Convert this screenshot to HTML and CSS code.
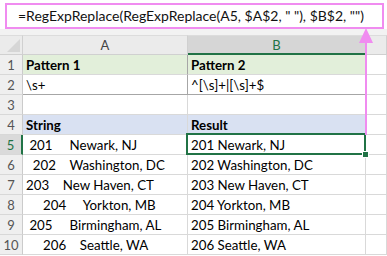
FILE: index.html
```html
<!DOCTYPE html>
<html lang="en">
<head>
    <meta charset="UTF-8">
    <title>RegExpReplace</title>
    <link rel="stylesheet" href="styles.css">
</head>
<body>

    <!-- Formula bar -->
    <div class="formula-bar">=RegExpReplace(RegExpReplace(A5, $A$2, " "), $B$2, "")</div>
    <div class="band"></div>

    <!-- Sheet -->
    <div class="sheet">
        <div class="corner"></div>
        <div class="col-head">A</div>
        <div class="col-head selected">B</div>
        <div class="col-head"></div>

        <div class="row-head">1</div>
        <div class="cell green bold boxed">Pattern 1</div>
        <div class="cell green bold">Pattern 2</div>
        <div class="cell"></div>

        <div class="row-head">2</div>
        <div class="cell boxed bottom-dark">\s+</div>
        <div class="cell bottom-dark">^[\s]+|[\s]+$</div>
        <div class="cell"></div>

        <div class="row-head">3</div>
        <div class="cell"></div>
        <div class="cell"></div>
        <div class="cell"></div>

        <div class="row-head">4</div>
        <div class="cell blue bold">String</div>
        <div class="cell blue bold">Result</div>
        <div class="cell"></div>

        <div class="row-head selected">5</div>
        <div class="cell pre"> 201     Newark, NJ</div>
        <div class="cell active">201 Newark, NJ</div>
        <div class="cell"></div>

        <div class="row-head">6</div>
        <div class="cell pre">  202    Washington, DC</div>
        <div class="cell">202 Washington, DC</div>
        <div class="cell"></div>

        <div class="row-head">7</div>
        <div class="cell pre">203    New Haven, CT</div>
        <div class="cell">203 New Haven, CT</div>
        <div class="cell"></div>

        <div class="row-head">8</div>
        <div class="cell pre">     204     Yorkton, MB</div>
        <div class="cell">204 Yorkton, MB</div>
        <div class="cell"></div>

        <div class="row-head">9</div>
        <div class="cell pre"> 205     Birmingham, AL</div>
        <div class="cell">205 Birmingham, AL</div>
        <div class="cell"></div>

        <div class="row-head">10</div>
        <div class="cell pre">     206    Seattle, WA</div>
        <div class="cell">206 Seattle, WA</div>
        <div class="cell"></div>
    </div>

    <!-- Pink pointer from the result cell up to the formula bar -->
    <svg class="pointer" width="20" height="110" viewBox="0 0 20 110">
        <line x1="10" y1="10" x2="10" y2="107" stroke="#f08cf0" stroke-width="2"/>
        <polygon points="10,0 3,15 17,15" fill="#f08cf0"/>
    </svg>

</body>
</html>
```

FILE: styles.css
```css
body {
    margin: 0;
    padding: 0;
    background-color: #fff;
    font-family: 'Lato', 'Liberation Sans', sans-serif;
    font-size: 13.3px;
    color: #000;
    position: relative;
    width: 387px;
    height: 256px;
    overflow: hidden;
}
.formula-bar {
    box-sizing: border-box;
    height: 26px;
    margin: 3px 3px 0 5px;
    padding-left: 11px;
    border: 2px solid #f08cf0;
    background-color: #fff;
    line-height: 21px;
    font-size: 14px;
    color: #111;
    white-space: pre;
}
.band {
    height: 6px;
    background-color: #f2f2f2;
}
.sheet {
    display: grid;
    grid-template-columns: 23px 165px 178px 21px;
    grid-auto-rows: 20px;
}
.sheet > div {
    box-sizing: border-box;
}
.corner {
    background-color: #ebebeb;
    border-right: 1px solid #d0d0d0;
    border-bottom: 1px solid #d0d0d0;
    border-top: 1px solid #dcdcdc;
    position: relative;
}
.corner::after {
    content: "";
    position: absolute;
    right: 2px;
    bottom: 2px;
    width: 13px;
    height: 13px;
    background-color: #d6d6d6;
    clip-path: polygon(100% 0, 100% 100%, 0 100%);
}
.col-head {
    background-color: #ebebeb;
    border-top: 1px solid #dcdcdc;
    border-right: 1px solid #d0d0d0;
    border-bottom: 1px solid #d0d0d0;
    text-align: center;
    line-height: 18px;
    font-size: 13px;
    color: #444;
}
.col-head.selected {
    background-color: #d6d6d6;
    border-bottom: 2px solid #217346;
    color: #217346;
}
.row-head {
    background-color: #efefef;
    border-right: 1px solid #cbcbcb;
    border-bottom: 1px solid #d8d8d8;
    text-align: center;
    line-height: 20px;
    font-size: 13px;
    color: #555;
}
.row-head.selected {
    background-color: #dadada;
    border-right: 2px solid #217346;
    color: #217346;
}
.cell {
    border-right: 1px solid #d9d9d9;
    border-bottom: 1px solid #d9d9d9;
    padding-left: 3px;
    line-height: 21px;
    white-space: pre;
    overflow: hidden;
    position: relative;
}
.bold {
    font-weight: bold;
}
.green {
    background-color: #e2efda;
}
.blue {
    background-color: #d9e1f2;
}
.boxed {
    border-right-color: #a6a6a6;
}
.bottom-dark {
    border-bottom-color: #a6a6a6;
}
.cell.active {
    overflow: visible;
}
.cell.active::before {
    content: "";
    position: absolute;
    left: -2px;
    top: -2px;
    right: -1px;
    bottom: -1px;
    border: 2px solid #217346;
}
.cell.active::after {
    content: "";
    position: absolute;
    right: -4px;
    bottom: -4px;
    width: 5px;
    height: 5px;
    background-color: #217346;
    border: 1px solid #fff;
    z-index: 2;
}
.pointer {
    position: absolute;
    left: 356px;
    top: 28px;
}
```
